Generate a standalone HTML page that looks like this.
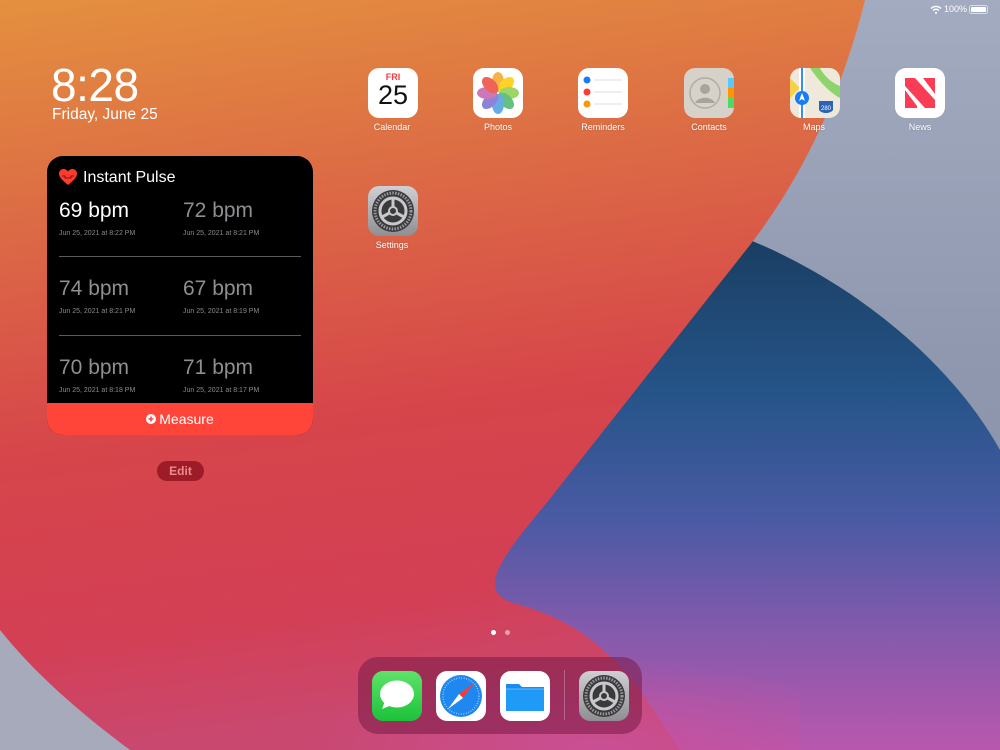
<!DOCTYPE html>
<html><head><meta charset="utf-8"><style>
*{margin:0;padding:0;box-sizing:border-box}
body{width:1000px;height:750px;overflow:hidden;position:relative;font-family:"Liberation Sans",sans-serif;background:#a34fa8}
#bg{position:absolute;left:0;top:0}
.ic{position:absolute;width:50px;height:50px;border-radius:11px;overflow:hidden;background:#fff}
.lb{position:absolute;width:80px;text-align:center;color:#fff;font-size:9px;text-shadow:0 0 2px rgba(0,0,0,.2)}
.w{position:absolute;left:47px;top:156px;width:266px;height:279px;border-radius:16px;background:#000;overflow:hidden}
.bpm{position:absolute;font-size:21px;color:#8e8e93}
.dt{position:absolute;font-size:7px;color:#8a8a8e}
.hr{position:absolute;left:12px;width:242px;height:1px;background:#5a5a5e}
</style></head><body>
<svg id="bg" width="1000" height="750" viewBox="0 0 1000 750">
<defs>
<linearGradient id="pb" x1="0" y1="0" x2="0" y2="1">
<stop offset="0" stop-color="#a3abc0"/><stop offset="0.5" stop-color="#8e97ae"/><stop offset="1" stop-color="#8a93ab"/></linearGradient>
<linearGradient id="bl" x1="0" y1="0" x2="0" y2="1">
<stop offset="0" stop-color="#1a3e62"/><stop offset="0.3" stop-color="#255488"/><stop offset="0.55" stop-color="#4a5aa4"/><stop offset="0.75" stop-color="#805aac"/><stop offset="1" stop-color="#b957ae"/></linearGradient>
<linearGradient id="rd" x1="0" y1="0" x2="0.15" y2="1">
<stop offset="0" stop-color="#e4903f"/><stop offset="0.3" stop-color="#dc6a45"/><stop offset="0.6" stop-color="#d6454a"/><stop offset="0.85" stop-color="#d33f55"/><stop offset="1" stop-color="#c94870"/></linearGradient>
<radialGradient id="pk" cx="0.6" cy="1" r="0.6">
<stop offset="0" stop-color="#c9509a" stop-opacity="0.9"/><stop offset="1" stop-color="#c9509a" stop-opacity="0"/></radialGradient>
</defs>
<rect width="1000" height="750" fill="url(#pb)"/>
<path d="M745,238 C850,280 950,360 1000,450 L1000,750 L400,750 L400,238 Z" fill="url(#bl)"/>
<path d="M0,0 L865,0 C840,100 800,180 750,245 L545,505 C490,570 478,595 520,605 C570,620 600,640 640,690 L680,750 L0,750 Z" fill="url(#rd)"/>
<rect x="300" y="600" width="500" height="150" fill="url(#pk)"/>
<path d="M0,630 C40,680 90,720 130,750 L0,750 Z" fill="#a7aabb"/>
</svg>

<!-- status -->
<div style="position:absolute;left:944px;top:4px;color:#fff;font-size:9px">100%</div>
<svg style="position:absolute;left:930px;top:5px" width="12" height="9" viewBox="0 0 12 9"><path d="M1,3.5 A7,7 0 0 1 11,3.5" stroke="#fff" stroke-width="1.4" fill="none"/><path d="M3,5.5 A4.2,4.2 0 0 1 9,5.5" stroke="#fff" stroke-width="1.4" fill="none"/><circle cx="6" cy="7.8" r="1.1" fill="#fff"/></svg>
<div style="position:absolute;left:969px;top:5px;width:19px;height:9px;border:1px solid rgba(255,255,255,.6);border-radius:2.5px;padding:1px"><div style="width:100%;height:100%;background:#fff;border-radius:1px"></div></div>

<div style="position:absolute;left:51px;top:58px;color:#fff;font-size:46px;letter-spacing:-0.5px">8:28</div>
<div style="position:absolute;left:52px;top:106px;color:#fff;font-size:15.5px">Friday, June 25</div>

<div class="w">
<svg style="position:absolute;left:12px;top:13px" width="18" height="17" viewBox="0 0 18 17"><path d="M9,16 C3,11 0,8 0,4.5 C0,2 2,0 4.5,0 C6.5,0 8,1 9,2.5 C10,1 11.5,0 13.5,0 C16,0 18,2 18,4.5 C18,8 15,11 9,16Z" fill="#ff3b30"/><path d="M3,7 L6,7 L6,9 L12,9 L12,7 L15,7" stroke="#600" stroke-width="0.8" fill="none"/></svg>
<div style="position:absolute;left:36px;top:13px;color:#fff;font-size:16px">Instant Pulse</div>
<div class="bpm" style="left:12px;top:43px;color:#fff">69 bpm</div>
<div class="bpm" style="left:136px;top:43px">72 bpm</div>
<div class="dt" style="left:12px;top:74px">Jun 25, 2021 at 8:22 PM</div>
<div class="dt" style="left:136px;top:74px">Jun 25, 2021 at 8:21 PM</div>
<div class="hr" style="top:100px"></div>
<div class="bpm" style="left:12px;top:121px">74 bpm</div>
<div class="bpm" style="left:136px;top:121px">67 bpm</div>
<div class="dt" style="left:12px;top:152px">Jun 25, 2021 at 8:21 PM</div>
<div class="dt" style="left:136px;top:152px">Jun 25, 2021 at 8:19 PM</div>
<div class="hr" style="top:179px"></div>
<div class="bpm" style="left:12px;top:200px">70 bpm</div>
<div class="bpm" style="left:136px;top:200px">71 bpm</div>
<div class="dt" style="left:12px;top:231px">Jun 25, 2021 at 8:18 PM</div>
<div class="dt" style="left:136px;top:231px">Jun 25, 2021 at 8:17 PM</div>
<div style="position:absolute;left:0;top:247px;width:266px;height:32px;background:#ff453a;color:#fff;font-size:14px;display:flex;align-items:center;justify-content:center;gap:3px"><svg width="10" height="10" viewBox="0 0 10 10"><circle cx="5" cy="5" r="5" fill="#fff"/><path d="M5,2.5 V7.5 M2.5,5 H7.5" stroke="#ff453a" stroke-width="1.6"/></svg><span>Measure</span></div>
</div>
<div style="position:absolute;left:157px;top:461px;width:47px;height:20px;border-radius:10px;background:#9e1c27;color:#f08a90;font-size:12px;font-weight:bold;text-align:center;line-height:20px">Edit</div>

<!-- apps -->
<div class="ic" style="left:368px;top:68px"><div style="position:absolute;top:4px;width:50px;text-align:center;color:#f03c3c;font-size:9px;font-weight:bold">FRI</div><div style="position:absolute;top:12px;width:50px;text-align:center;color:#111;font-size:27px">25</div></div>
<div class="lb" style="left:352px;top:122px">Calendar</div>

<div class="ic" style="left:473px;top:68px"><svg width="50" height="50" viewBox="0 0 50 50">
<g transform="translate(25,25)" opacity="0.85">
<ellipse cx="0" cy="-11" rx="6" ry="10" fill="#f5a623"/>
<ellipse cx="0" cy="-11" rx="6" ry="10" fill="#ffcc00" transform="rotate(45)"/>
<ellipse cx="0" cy="-11" rx="6" ry="10" fill="#8bd04a" transform="rotate(90)"/>
<ellipse cx="0" cy="-11" rx="6" ry="10" fill="#4cb56c" transform="rotate(135)"/>
<ellipse cx="0" cy="-11" rx="6" ry="10" fill="#4a9ee0" transform="rotate(180)"/>
<ellipse cx="0" cy="-11" rx="6" ry="10" fill="#7a6fd0" transform="rotate(225)"/>
<ellipse cx="0" cy="-11" rx="6" ry="10" fill="#c560b0" transform="rotate(270)"/>
<ellipse cx="0" cy="-11" rx="6" ry="10" fill="#ec4a3a" transform="rotate(315)"/>
</g></svg></div>
<div class="lb" style="left:458px;top:122px">Photos</div>

<div class="ic" style="left:578px;top:68px"><svg width="50" height="50" viewBox="0 0 50 50">
<circle cx="9" cy="12" r="3.5" fill="#1a7cf5"/><circle cx="9" cy="24" r="3.5" fill="#ff3b30"/><circle cx="9" cy="36" r="3.5" fill="#ff9500"/>
<g stroke="#ddd" stroke-width="1"><line x1="16" y1="12" x2="44" y2="12"/><line x1="16" y1="24" x2="44" y2="24"/><line x1="16" y1="36" x2="44" y2="36"/></g></svg></div>
<div class="lb" style="left:563px;top:122px">Reminders</div>

<div class="ic" style="left:684px;top:68px;background:#d6d2c9"><svg width="50" height="50" viewBox="0 0 50 50">
<rect x="44" y="10" width="6" height="10" fill="#5ac8fa"/><rect x="44" y="20" width="6" height="10" fill="#ff9500"/><rect x="44" y="30" width="6" height="10" fill="#4cd964"/>
<circle cx="21" cy="25" r="15" fill="none" stroke="#b0aca4" stroke-width="1.5"/><circle cx="21" cy="21" r="5" fill="#a8a49c"/><path d="M11,35 C14,28 28,28 31,35" fill="#a8a49c"/></svg></div>
<div class="lb" style="left:669px;top:122px">Contacts</div>

<div class="ic" style="left:790px;top:68px;background:#efe9dc"><svg width="50" height="50" viewBox="0 0 50 50">
<path d="M20,0 L50,0 L50,30 C40,25 28,12 20,0Z" fill="#8fd46a"/><path d="M30,0 L50,0 L50,18 C42,15 34,8 30,0Z" fill="#efe9dc"/>
<path d="M0,10 L10,20 L0,30Z" fill="#f5d14a"/><rect x="9" y="0" width="6" height="50" fill="#fff"/><rect x="11" y="0" width="2" height="50" fill="#3b8cf0"/>
<circle cx="12" cy="30" r="7" fill="#1a7cf5"/><path d="M12,25 L15,33 L12,31 L9,33Z" fill="#fff"/>
<path d="M29,33 L43,33 L43,42 C40,46 32,46 29,42Z" fill="#2a63b8"/><text x="36" y="42" font-size="6" fill="#fff" text-anchor="middle">280</text></svg></div>
<div class="lb" style="left:774px;top:122px">Maps</div>

<div class="ic" style="left:895px;top:68px"><svg width="50" height="50" viewBox="0 0 50 50">
<path d="M10,10 L20,10 L40,32 L40,40 L30,40 L10,18Z" fill="#fa3d55"/><path d="M10,22 L22,38 L22,40 L10,40Z" fill="#fa3d55"/><path d="M28,10 L40,10 L40,26Z" fill="#fa3d55"/></svg></div>
<div class="lb" style="left:880px;top:122px">News</div>

<div class="ic" id="set" style="left:368px;top:186px;background:linear-gradient(#d0d0d4,#8e8e93)"><svg width="50" height="50" viewBox="0 0 50 50"><circle cx="25" cy="25" r="21" fill="#3a3a3c"/><circle cx="25" cy="25" r="18" fill="none" stroke="#9a9a9e" stroke-width="3" stroke-dasharray="1.5 1.3"/><circle cx="25" cy="25" r="13" fill="none" stroke="#c8c8cc" stroke-width="3"/><g stroke="#c8c8cc" stroke-width="3"><line x1="25" y1="25" x2="25" y2="12"/><line x1="25" y1="25" x2="36" y2="31"/><line x1="25" y1="25" x2="14" y2="31"/></g><circle cx="25" cy="25" r="4" fill="#3a3a3c" stroke="#c8c8cc" stroke-width="2"/></svg></div>
<div class="lb" style="left:352px;top:240px">Settings</div>

<div style="position:absolute;left:491px;top:630px;width:5px;height:5px;border-radius:50%;background:#fff"></div>
<div style="position:absolute;left:505px;top:630px;width:5px;height:5px;border-radius:50%;background:rgba(255,255,255,.5)"></div>

<!-- dock -->
<div style="position:absolute;left:358px;top:657px;width:284px;height:77px;border-radius:20px;background:rgba(120,25,70,.55)"></div>
<div style="position:absolute;left:564px;top:670px;width:1px;height:50px;background:rgba(255,255,255,.25)"></div>
<div class="ic" style="left:372px;top:671px;background:linear-gradient(#5ee36a,#1cc23a)"><svg width="50" height="50" viewBox="0 0 50 50"><ellipse cx="25" cy="23" rx="17" ry="13.5" fill="#fff"/><path d="M13,30 L10,38 L20,34Z" fill="#fff"/></svg></div>
<div class="ic" style="left:436px;top:671px"><svg width="50" height="50" viewBox="0 0 50 50"><circle cx="25" cy="25" r="21" fill="#1e88f0"/><circle cx="25" cy="25" r="18" fill="none" stroke="#fff" stroke-width="1.5" stroke-dasharray="0.7 1.8" opacity=".7"/><path d="M38,12 L27,27 L23,23Z" fill="#ff3b30"/><path d="M12,38 L23,23 L27,27Z" fill="#fff"/></svg></div>
<div class="ic" style="left:500px;top:671px"><svg width="50" height="50" viewBox="0 0 50 50"><path d="M6,13 L19,13 L22,16 L44,16 L44,40 L6,40Z" fill="#1a8cf0"/><rect x="6" y="18" width="38" height="22" rx="1" fill="#1f9bf7"/><line x1="6" y1="18" x2="44" y2="18" stroke="#7fc8ff" stroke-width=".8"/></svg></div>
<div class="ic" style="left:579px;top:671px;background:linear-gradient(#d0d0d4,#8e8e93)"><svg width="50" height="50" viewBox="0 0 50 50"><circle cx="25" cy="25" r="21" fill="#3a3a3c"/><circle cx="25" cy="25" r="18" fill="none" stroke="#9a9a9e" stroke-width="3" stroke-dasharray="1.5 1.3"/><circle cx="25" cy="25" r="13" fill="none" stroke="#c8c8cc" stroke-width="3"/><g stroke="#c8c8cc" stroke-width="3"><line x1="25" y1="25" x2="25" y2="12"/><line x1="25" y1="25" x2="36" y2="31"/><line x1="25" y1="25" x2="14" y2="31"/></g><circle cx="25" cy="25" r="4" fill="#3a3a3c" stroke="#c8c8cc" stroke-width="2"/></svg></div>
</body></html>
